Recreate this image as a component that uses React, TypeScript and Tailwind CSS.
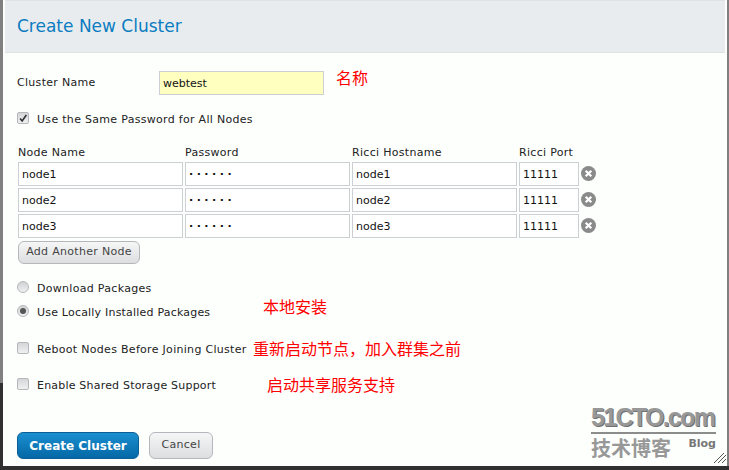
import React from 'react';

const FONT = "font-['DejaVu_Sans',sans-serif]";
const CJK = "font-['Noto_Sans_CJK_SC',sans-serif]";

const nodes = ['node1', 'node2', 'node3'];
const field = `h-6 border border-[#ccd0d4] px-[3px] text-[11px] text-[#111] outline-none ${FONT}`;

function CheckBox({ checked }: { checked?: boolean }) {
  return (
    <span className="mb-1 flex h-3 w-3 shrink-0 items-center justify-center rounded-[2px] border border-[#b4b8bc] bg-gradient-to-b from-[#d4d6d8] to-[#f0f0f0]">
      {checked && (
        <svg viewBox="0 0 12 12" className="h-3 w-3">
          <path d="M2.5 6.5 L5 9.5 L10 2.5" fill="none" stroke="#333" strokeWidth="2" />
        </svg>
      )}
    </span>
  );
}

function Radio({ checked }: { checked?: boolean }) {
  return (
    <span className="mb-1 flex h-3 w-3 shrink-0 items-center justify-center rounded-full border border-[#b4b8bc] bg-gradient-to-b from-[#d0d2d4] to-[#f0f0f0]">
      {checked && <span className="h-1.5 w-1.5 rounded-full bg-[#555]" />}
    </span>
  );
}

function RemoveIcon() {
  return (
    <svg viewBox="0 0 16 16" className="mb-0.5 h-[15px] w-[15px] shrink-0">
      <circle cx="8" cy="8" r="8" fill="#8a8a8a" />
      <path d="M5 5 L11 11 M11 5 L5 11" stroke="#fff" strokeWidth="2.4" />
    </svg>
  );
}

function Note({ className, children }: { className: string; children: React.ReactNode }) {
  return <span className={`absolute text-[16px] leading-5 tracking-normal whitespace-nowrap text-[#f00] ${CJK} ${className}`}>{children}</span>;
}

export default function App() {
  return (
    <div className={`relative h-[470px] w-[729px] overflow-hidden bg-[#303030] ${FONT}`}>
      <div className="absolute top-0 left-0 h-[383px] w-[3px] bg-[#808080]" />
      <div className="absolute top-0 right-0 h-[466px] w-[2px] bg-[#808080]" />
      <div className="relative ml-[3px] h-[466px] w-[724px] bg-[#fdfffd] text-[11px] tracking-[0.3px] text-[#222]">
        {/* Header */}
        <div className="mx-[2px] flex h-[53px] items-center border-t border-b border-[#dfe3e6] bg-[#e9ecef] pt-px pl-[12px]">
          <h1 className="text-[17px] font-normal tracking-normal text-[#0a7cc0]">Create New Cluster</h1>
        </div>

        <div className="pl-[14px]">
          <div className="mt-[18px] flex h-6 items-center">
            <label className="w-[142px]">Cluster Name</label>
            <input readOnly value="webtest" className={`${field} w-[165px] bg-[#ffffc0] tracking-normal`} />
          </div>

          <div className="mt-[15px] flex h-5 items-center gap-2">
            <CheckBox checked />
            <span>Use the Same Password for All Nodes</span>
          </div>

          {/* Node table */}
          <div className="mt-4 ml-px flex h-[14px] items-center">
            <span className="w-[167px]">Node Name</span>
            <span className="w-[167px]">Password</span>
            <span className="w-[167px]">Ricci Hostname</span>
            <span>Ricci Port</span>
          </div>
          <div className="mt-0.5 ml-px flex flex-col gap-0.5">
            {nodes.map((n) => (
              <div key={n} className="flex items-center gap-0.5">
                <input readOnly value={n} className={`${field} w-[165px] bg-white tracking-normal`} />
                <input readOnly value="······" className={`${field} w-[165px] bg-white font-bold tracking-[3.5px]`} />
                <input readOnly value={n} className={`${field} w-[165px] bg-white tracking-normal`} />
                <input readOnly value="11111" className={`${field} w-[60px] bg-white tracking-normal`} />
                <RemoveIcon />
              </div>
            ))}
          </div>
          <button className="mt-[3px] ml-px h-[23px] w-[122px] rounded-md border border-[#b4b8bc] bg-gradient-to-b from-[#f6f6f6] to-[#dcdee0] text-[11px] text-[#444]">
            Add Another Node
          </button>

          <div className="mt-[15px] flex h-5 items-center gap-2">
            <Radio />
            <span>Download Packages</span>
          </div>
          <div className="mt-1 flex h-5 items-center gap-2">
            <Radio checked />
            <span className="tracking-[0.2px]">Use Locally Installed Packages</span>
          </div>
          <div className="mt-[17px] flex h-5 items-center gap-2">
            <CheckBox />
            <span>Reboot Nodes Before Joining Cluster</span>
          </div>
          <div className="mt-4 flex h-5 items-center gap-2">
            <CheckBox />
            <span className="tracking-[0.2px]">Enable Shared Storage Support</span>
          </div>

          <div className="mt-9 flex items-center gap-[10px]">
            <button className="h-[27px] w-[122px] rounded-md border border-[#0a5f96] bg-gradient-to-b from-[#1a8fd0] to-[#0568a6] text-[12px] font-bold tracking-normal text-white">
              Create Cluster
            </button>
            <button className="h-[27px] w-[64px] rounded-md border border-[#b4b8bc] bg-gradient-to-b from-[#f6f6f6] to-[#dcdee0] text-[11px] text-[#444]">
              Cancel
            </button>
          </div>
        </div>

        {/* Red annotations on top of the shot */}
        <Note className="top-[67px] left-[333px]">名称</Note>
        <Note className="top-[296px] left-[260px]">本地安装</Note>
        <Note className="top-[338px] left-[250px]">重新启动节点，加入群集之前</Note>
        <Note className="top-[374px] left-[264px]">启动共享服务支持</Note>

        {/* Watermark */}
        <div className="absolute top-[403px] right-[11px] w-[125px] tracking-normal text-[#989898]">
          <div className="border-b-2 border-[#8c8c8c] font-['Liberation_Sans',sans-serif] text-[25px] leading-[29px] font-bold tracking-[-1.7px] whitespace-nowrap [text-shadow:1px_1px_0_#707070]">51CTO.com</div>
          <div className="flex items-start justify-between">
            <span className={`text-[20px] leading-[28px] font-bold ${CJK}`}>技术博客</span>
            <span className="mt-0.5 text-[11px] font-bold text-[#777]">Blog</span>
          </div>
        </div>

        {/* Resize grip */}
        <svg viewBox="0 0 14 12" className="absolute top-[452px] left-[710px] h-3 w-[14px]">
          <path d="M1 11 L11 1 M5 11 L13 3 M9 11 L13 7" stroke="#555" strokeWidth="1" fill="none" />
        </svg>
      </div>
    </div>
  );
}
